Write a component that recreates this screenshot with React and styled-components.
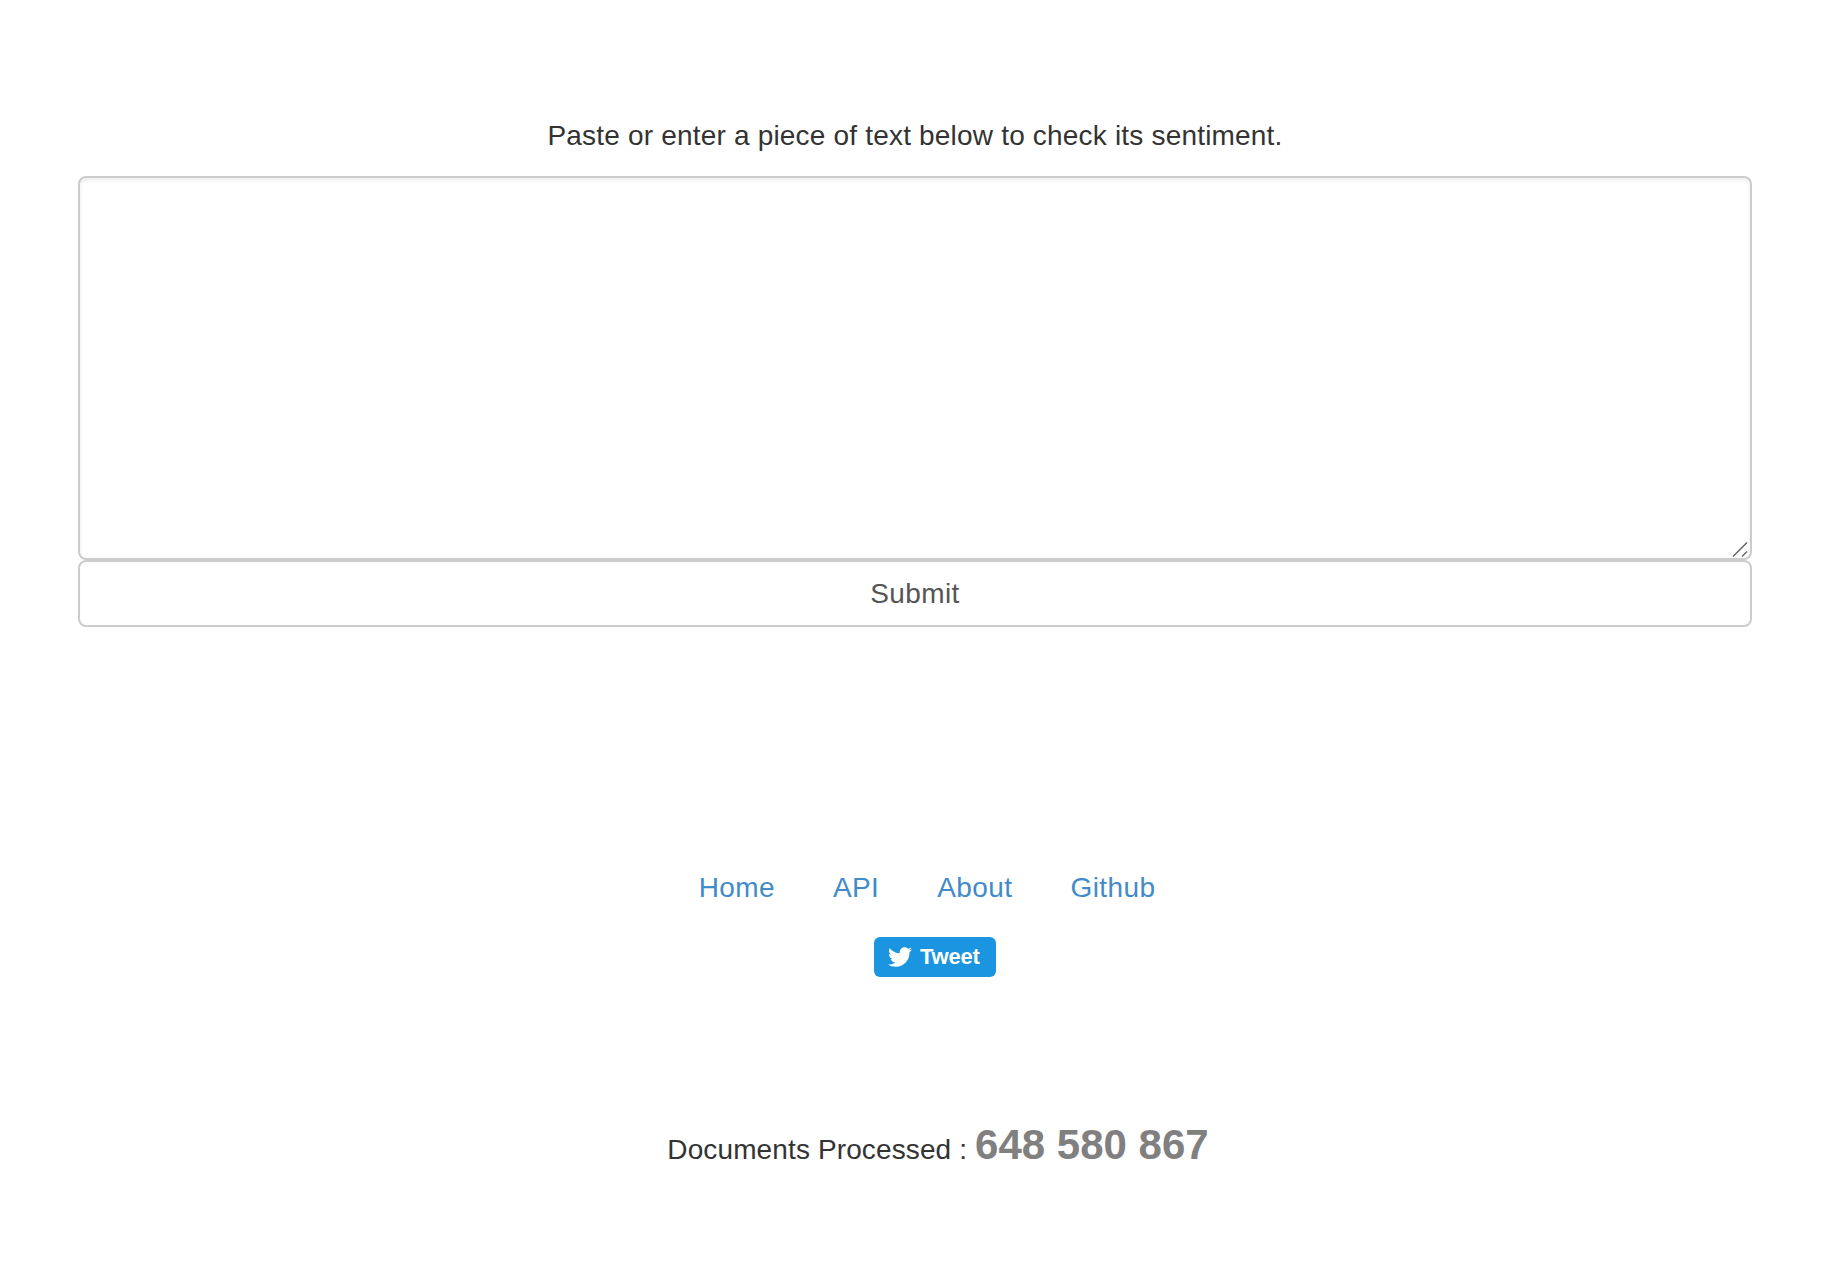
import React from 'react';
import styled, { createGlobalStyle } from 'styled-components';
import { FaTwitter } from 'react-icons/fa';

const Global = createGlobalStyle`
  html, body { margin: 0; padding: 0; background: #fff; }
  body { font-family: "Liberation Sans", Arial, sans-serif; font-size: 28px; line-height: 40px; color: #333; }
  * { box-sizing: border-box; }
`;

const Page = styled.main`
  width: 1832px;
  min-height: 1288px;
  padding: 116px 80px 0 78px;
  display: flex;
  flex-direction: column;
  align-items: stretch;
`;

const Prompt = styled.p`
  margin: 0 0 20px;
  height: 40px;
  text-align: center;
  letter-spacing: 0.19px;
`;

const Field = styled.div`
  position: relative;
  height: 384px;
`;

const TextArea = styled.textarea`
  display: block;
  width: 100%;
  height: 100%;
  padding: 8px 16px;
  border: 2px solid #ccc;
  border-radius: 8px;
  box-shadow: inset 0 2px 4px rgba(0, 0, 0, 0.075);
  resize: none;
  outline: none;
  background: #fff;
  font: inherit;
  color: #555;
`;

const Grip = styled.svg`
  position: absolute;
  right: 4px;
  bottom: 3px;
  width: 16px;
  height: 16px;
`;

const SubmitButton = styled.button`
  display: block;
  width: 100%;
  height: 67px;
  border: 2px solid #ccc;
  border-radius: 8px;
  background: #fff;
  box-shadow: inset 0 1px 2px rgba(0, 0, 0, 0.03);
  color: #555;
  font: inherit;
  letter-spacing: 0.4px;
  text-align: center;
`;

const Nav = styled.nav`
  display: flex;
  justify-content: center;
  gap: 58px;
  margin-top: 241px;
  padding-left: 24px;
`;

const NavLink = styled.a`
  color: #428bca;
  letter-spacing: 0.4px;
  text-decoration: none;
`;

const TweetRow = styled.div`
  display: flex;
  justify-content: center;
  margin-top: 29px;
  padding-left: 40px;
`;

const TweetButton = styled.a`
  display: flex;
  align-items: center;
  gap: 8px;
  width: 122px;
  height: 40px;
  padding-left: 14px;
  border-radius: 6px;
  background: #1b95e0;
  color: #fff;
  font-size: 22px;
  font-weight: 700;
  line-height: 40px;
  letter-spacing: -0.2px;
  text-decoration: none;
`;

const Stats = styled.div`
  display: flex;
  justify-content: center;
  align-items: baseline;
  margin-top: 148px;
  padding-left: 46px;
  letter-spacing: 0.12px;
  white-space: pre;
`;

const Count = styled.span`
  margin-left: 8px;
  color: #808080;
  font-size: 42px;
  font-weight: 700;
  letter-spacing: 0;
`;

export default function App() {
  return (
    <Page>
      <Global />
      <Prompt>Paste or enter a piece of text below to check its sentiment.</Prompt>
      <Field>
        <TextArea aria-label="Text" />
        <Grip viewBox="0 0 16 16" aria-hidden="true">
          <path d="M1 15.5 L15 1.5 M10 15.5 L15 10.5" stroke="#666" strokeWidth="1.5" fill="none" />
        </Grip>
      </Field>
      <SubmitButton type="button">Submit</SubmitButton>
      <Nav>
        <NavLink href="#">Home</NavLink>
        <NavLink href="#">API</NavLink>
        <NavLink href="#">About</NavLink>
        <NavLink href="#">Github</NavLink>
      </Nav>
      <TweetRow>
        <TweetButton href="#">
          <FaTwitter size={24} />
          Tweet
        </TweetButton>
      </TweetRow>
      <Stats>
        Documents Processed :<Count>648 580 867</Count>
      </Stats>
    </Page>
  );
}
